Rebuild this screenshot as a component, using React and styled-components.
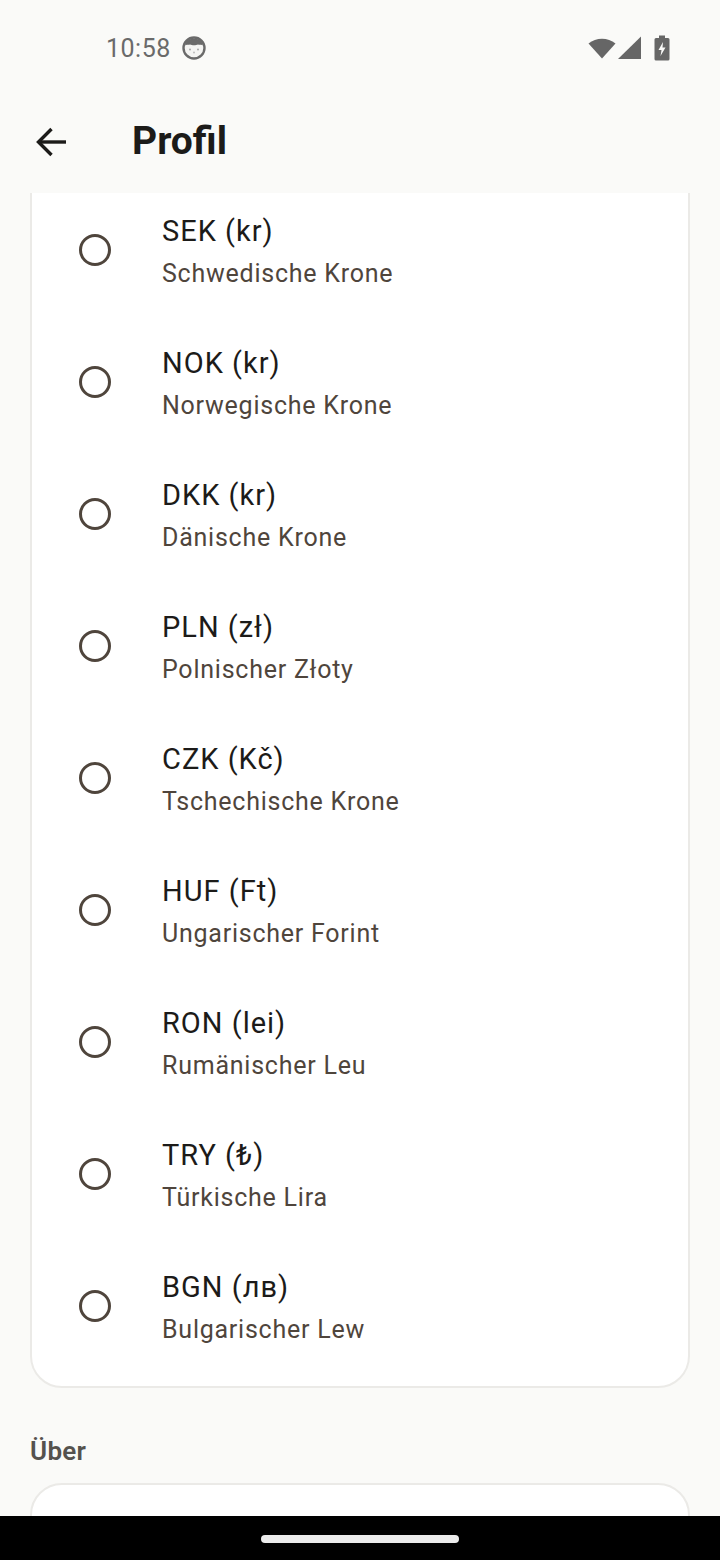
import React from "react";
import styled, { createGlobalStyle } from "styled-components";

const Global = createGlobalStyle`
  html, body { margin: 0; padding: 0; background: #fafaf8; }
  * { box-sizing: border-box; }
`;

const Screen = styled.div`
  width: 720px;
  height: 1560px;
  display: flex;
  flex-direction: column;
  overflow: hidden;
  background: #fafaf8;
  font-family: Roboto, "Noto Sans", sans-serif;
`;

const StatusBar = styled.div`
  height: 96px;
  flex: none;
  display: flex;
  align-items: center;
  justify-content: space-between;
  padding: 0 50px 0 106px;
`;

const StatusLeft = styled.div`
  display: flex;
  align-items: center;
  gap: 11px;
`;

const Clock = styled.span`
  font-size: 25px;
  color: #6a6a6a;
  letter-spacing: 0.5px;
`;

const StatusRight = styled.div`
  display: flex;
  align-items: center;
`;

const AppBar = styled.header`
  height: 97px;
  flex: none;
  display: flex;
  align-items: center;
  padding: 0 0 8px 35px;
  gap: 65px;
`;

const BackButton = styled.div`
  width: 32px;
  height: 32px;
  margin-top: 2px;
  display: flex;
  align-items: center;
  justify-content: center;
`;

const Title = styled.h1`
  margin: 0;
  font-size: 39px;
  font-weight: 700;
  font-variant-ligatures: common-ligatures;
  color: #1c1b19;
`;

const Scroll = styled.main`
  flex: 1;
  min-height: 0;
  overflow: hidden;
  padding: 0 30px;
`;

const Card = styled.section`
  background: #fff;
  border: 2px solid #ebeae7;
  border-radius: 32px;
  padding-bottom: 14px;
`;

const CurrencyCard = styled(Card)`
  margin-top: -60px;
  padding-top: 49px;
`;

const Row = styled.div`
  height: 132px;
  display: flex;
  align-items: center;
  padding-left: 47px;
  gap: 51px;
`;

const Radio = styled.span`
  width: 32px;
  height: 32px;
  flex: none;
  border: 3.5px solid #4f453c;
  border-radius: 50%;
`;

const RowText = styled.div`
  display: flex;
  flex-direction: column;
  gap: 9px;
  margin-top: 5px;
`;

const Code = styled.div`
  font-size: 29px;
  line-height: 33px;
  letter-spacing: 1px;
  color: #1c1b19;
`;

const Name = styled.div`
  font-size: 25px;
  line-height: 33px;
  letter-spacing: 0.76px;
  color: #4f453c;
`;

const SectionLabel = styled.h2`
  margin: 48px 0 17px;
  font-size: 26px;
  line-height: 30px;
  font-weight: 600;
  letter-spacing: 0.3px;
  color: #55524e;
`;

const NavBar = styled.footer`
  height: 44px;
  flex: none;
  background: #000;
  display: flex;
  align-items: center;
  justify-content: center;
`;

const HomePill = styled.div`
  width: 198px;
  height: 8px;
  margin-top: 1px;
  border-radius: 4px;
  background: #ececec;
`;

const currencies = [
  ["SEK (kr)", "Schwedische Krone"],
  ["NOK (kr)", "Norwegische Krone"],
  ["DKK (kr)", "Dänische Krone"],
  ["PLN (zł)", "Polnischer Złoty"],
  ["CZK (Kč)", "Tschechische Krone"],
  ["HUF (Ft)", "Ungarischer Forint"],
  ["RON (lei)", "Rumänischer Leu"],
  ["TRY (₺)", "Türkische Lira"],
  ["BGN (лв)", "Bulgarischer Lew"],
];

const FaceIcon = () => (
  <svg width="24" height="24" viewBox="0 0 24 24">
    <circle cx="12" cy="12" r="10.500" fill="#f4f4f2" stroke="#6a6a6a" strokeWidth="2.400" />
    <path d="M3 9.500 C4 0 20 0 21 9.500 C19 8 18 9.500 16 8.500 C14 9.500 10 9.500 8 8.500 C6 9.500 5 8 3 9.500Z" fill="#6a6a6a" />
    <circle cx="8" cy="13.500" r="1" fill="#a8a8a8" />
    <circle cx="16" cy="13.500" r="1" fill="#a8a8a8" />
    <circle cx="12" cy="16.500" r="1" fill="#bcbcbc" />
  </svg>
);

const WifiIcon = () => (
  <svg width="28" height="24" viewBox="0 0 28 24">
    <path d="M0.500 7.500 C8 1 20 1 27.500 7.500 L14 22.500 Z" fill="#666" />
  </svg>
);

const SignalIcon = () => (
  <svg width="24" height="24" viewBox="0 0 24 24" style={{ marginLeft: 2 }}>
    <path d="M0 23 L23 0.500 V23 Z" fill="#666" />
  </svg>
);

const BatteryIcon = () => (
  <svg width="16" height="26" viewBox="0 0 16 26" style={{ marginLeft: 12 }}>
    <path d="M5 0.500 H11 V3 H14 A1.500 1.500 0 0 1 15.500 4.500 V24 A1.500 1.500 0 0 1 14 25.500 H2 A1.500 1.500 0 0 1 0.500 24 V4.500 A1.500 1.500 0 0 1 2 3 H5 Z" fill="#666" />
    <path d="M9 7 L4.500 15 H7.500 L6.500 21 L11.500 12.500 H8.500 Z" fill="#fafaf8" />
  </svg>
);

const BackIcon = () => (
  <svg width="32" height="30" viewBox="0 0 32 30" fill="none" stroke="#1c1b19" strokeWidth="3.400">
    <path d="M31 15 H4" />
    <path d="M16.500 2 L3.500 15 L16.500 28" />
  </svg>
);

export default function App() {
  return (
    <Screen>
      <Global />
      <StatusBar>
        <StatusLeft>
          <Clock>10:58</Clock>
          <FaceIcon />
        </StatusLeft>
        <StatusRight>
          <WifiIcon />
          <SignalIcon />
          <BatteryIcon />
        </StatusRight>
      </StatusBar>
      <AppBar>
        <BackButton>
          <BackIcon />
        </BackButton>
        <Title>Profil</Title>
      </AppBar>
      <Scroll>
        <CurrencyCard>
          {currencies.map(([code, name]) => (
            <Row key={code}>
              <Radio />
              <RowText>
                <Code>{code}</Code>
                <Name>{name}</Name>
              </RowText>
            </Row>
          ))}
        </CurrencyCard>
        <SectionLabel>Über</SectionLabel>
        <Card>
          <Row />
        </Card>
      </Scroll>
      <NavBar>
        <HomePill />
      </NavBar>
    </Screen>
  );
}
